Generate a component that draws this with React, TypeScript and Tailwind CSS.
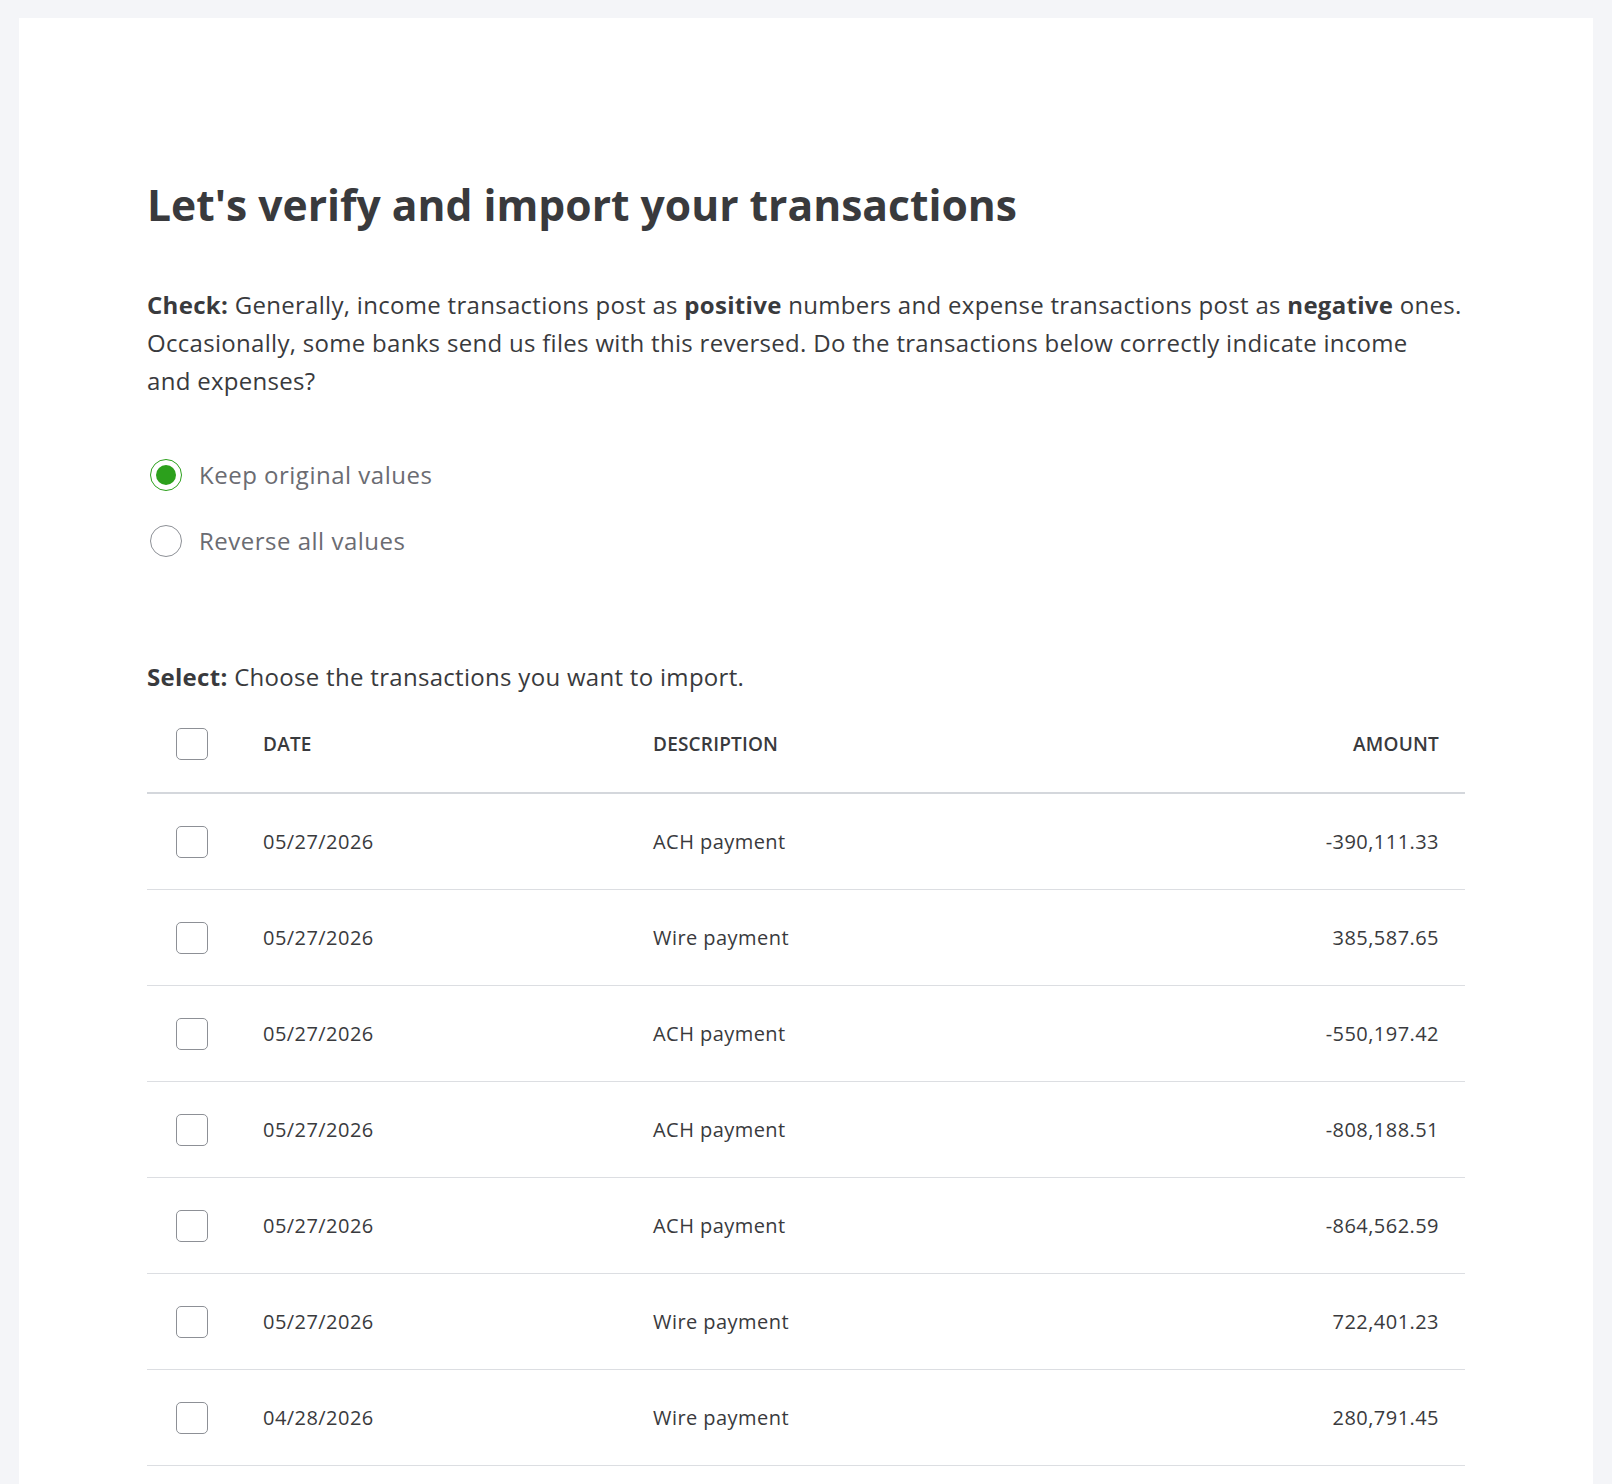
import React from "react";

const rows = [
  { date: "05/27/2026", desc: "ACH payment", amt: "-390,111.33" },
  { date: "05/27/2026", desc: "Wire payment", amt: "385,587.65" },
  { date: "05/27/2026", desc: "ACH payment", amt: "-550,197.42" },
  { date: "05/27/2026", desc: "ACH payment", amt: "-808,188.51" },
  { date: "05/27/2026", desc: "ACH payment", amt: "-864,562.59" },
  { date: "05/27/2026", desc: "Wire payment", amt: "722,401.23" },
  { date: "04/28/2026", desc: "Wire payment", amt: "280,791.45" },
];

function Box() {
  return <div className="w-[32px] h-[32px] rounded-[5px] border border-[#8d9096] bg-white" />;
}

export default function App() {
  return (
    <div className="min-h-screen bg-[#f4f5f8] pt-[18px] px-[19px] font-['Open_Sans','Lato',sans-serif] text-[#393a3d]">
      <div className="bg-white px-[128px] pt-[158px] min-h-[1466px]">
        <h1 className="text-[42.6px] leading-[56px] font-bold">
          Let's verify and import your transactions
        </h1>
        <p className="mt-[54px] text-[24px] leading-[38px] tracking-[0.3px]">
          <b className="font-bold">Check:</b> Generally, income transactions post as{" "}
          <b className="font-bold">positive</b> numbers and expense transactions post as{" "}
          <b className="font-bold">negative</b> ones. Occasionally, some banks send us files with this
          reversed. Do the transactions below correctly indicate income
          <br />
          and expenses?
        </p>
        <div className="mt-[59px] flex flex-col gap-[34px] text-[24px] leading-[32px] tracking-[0.5px] text-[#6b6c72]">
          <label className="flex items-center gap-[17px] ml-[3px]">
            <span className="w-[32px] h-[32px] rounded-full border border-[#2ca01c] flex items-center justify-center">
              <span className="w-[20px] h-[20px] rounded-full bg-[#2ca01c]" />
            </span>
            Keep original values
          </label>
          <label className="flex items-center gap-[17px] ml-[3px]">
            <span className="w-[32px] h-[32px] rounded-full border border-[#8d9096]" />
            Reverse all values
          </label>
        </div>
        <p className="mt-[101px] text-[24px] leading-[38px] tracking-[0.3px]">
          <b className="font-bold">Select:</b> Choose the transactions you want to import.
        </p>
        <div>
          <div className="flex items-center h-[98px] border-b-2 border-[#d4d7dc] text-[19px] font-semibold uppercase tracking-[0.2px]">
            <div className="w-[116px] pl-[29px]"><Box /></div>
            <div className="w-[390px]">Date</div>
            <div className="flex-1">Description</div>
            <div className="pr-[26px]">Amount</div>
          </div>
          {rows.map((r, i) => (
            <div key={i} className="flex items-center h-[96px] border-b border-[#dcdee2] text-[20px] tracking-[0.45px]">
              <div className="w-[116px] pl-[29px]"><Box /></div>
              <div className="w-[390px]">{r.date}</div>
              <div className="flex-1">{r.desc}</div>
              <div className="pr-[26px]">{r.amt}</div>
            </div>
          ))}
        </div>
      </div>
    </div>
  );
}
